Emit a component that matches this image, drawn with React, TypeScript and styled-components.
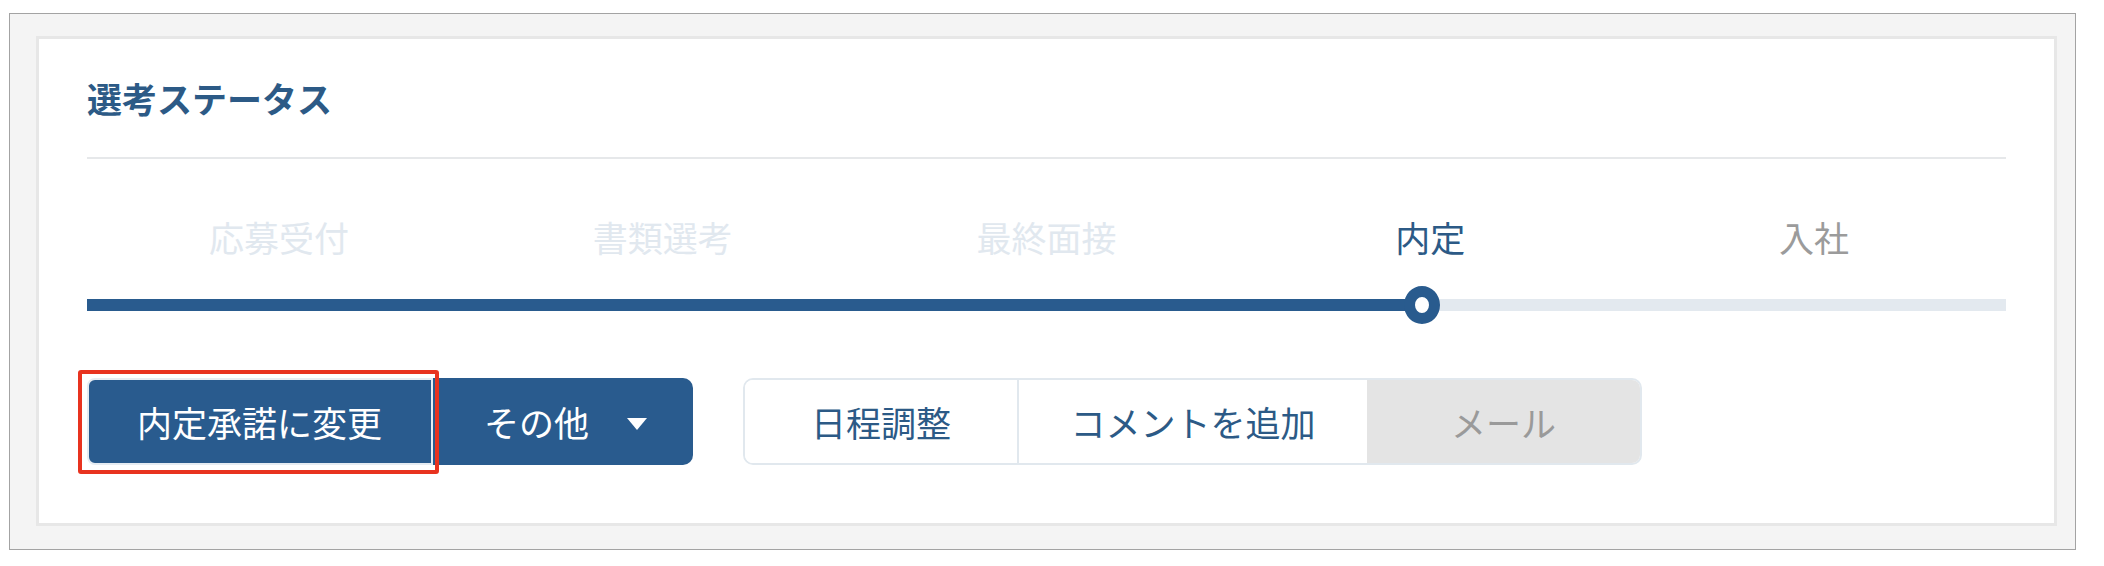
import styled, { createGlobalStyle } from 'styled-components'

const GlobalStyle = createGlobalStyle`
  html, body {
    margin: 0;
    padding: 0;
    background: #ffffff;
  }
  body {
    font-family: "Noto Sans CJK JP", "Noto Sans", sans-serif;
  }
`

const BLUE = '#295b8e'

const Frame = styled.div`
  margin: 13px 0 0 9px;
  width: 2067px;
  height: 537px;
  box-sizing: border-box;
  border: 1px solid #a3a3a3;
  background: #f4f4f4;
  padding: 22px 18px 23px 26px;
`

const Card = styled.section`
  box-sizing: border-box;
  height: 100%;
  background: #ffffff;
  border: 3px solid #e7e7e7;
  padding: 39px 48px 0;
`

const Title = styled.h2`
  margin: 0;
  font-size: 35px;
  line-height: 40px;
  font-weight: 700;
  color: #2c5a86;
`

const Divider = styled.hr`
  margin: 39px 0 0;
  border: 0;
  height: 2px;
  background: #e6e8ea;
`

const Steps = styled.ol`
  display: grid;
  grid-template-columns: repeat(5, 1fr);
  margin: 58px 0 0;
  padding: 0;
  list-style: none;
`

const Step = styled.li<{ $state: 'done' | 'current' | 'todo' }>`
  text-align: center;
  font-size: 35px;
  line-height: 40px;
  color: ${({ $state }) =>
    $state === 'current' ? '#2c5a86' : $state === 'done' ? '#e1e8ef' : '#9b9b9b'};
`

const TrackArea = styled.div`
  position: relative;
  height: 38px;
  margin-top: 29px;
  display: flex;
  align-items: center;
`

const Track = styled.div`
  width: 100%;
  height: 12px;
  background: #e3e9ef;
`

const Fill = styled.div`
  height: 100%;
  background: ${BLUE};
`

const Knob = styled.span`
  position: absolute;
  top: 0;
  width: 36px;
  height: 38px;
  box-sizing: border-box;
  border-radius: 50%;
  border: 11px solid ${BLUE};
  background: #ffffff;
  transform: translateX(-50%);
`

const Actions = styled.div`
  display: flex;
  align-items: center;
  gap: 50px;
  margin-top: 54px;
`

const SplitButton = styled.div`
  display: flex;
  height: 87px;
`

const PrimaryButton = styled.button`
  position: relative;
  z-index: 1;
  height: 100%;
  padding: 0 49px 0 48px;
  border: 2px solid #e6ecf2;
  border-radius: 8px 0 0 8px;
  background: ${BLUE};
  color: #ffffff;
  font-family: inherit;
  font-size: 35px;

  /* review annotation */
  &::after {
    content: '';
    position: absolute;
    inset: -10px -8px -11px -11px;
    border: 4px solid #e8331f;
    border-radius: 3px;
    pointer-events: none;
  }
`

const MenuButton = styled.button`
  display: flex;
  align-items: center;
  gap: 38px;
  height: 100%;
  padding: 0 46px 0 51px;
  border: 0;
  border-radius: 0 10px 10px 0;
  background: ${BLUE};
  color: #ffffff;
  font-family: inherit;
  font-size: 35px;
`

const Caret = styled.span`
  width: 0;
  height: 0;
  border-left: 10px solid transparent;
  border-right: 10px solid transparent;
  border-top: 12px solid #ffffff;
  margin-top: 4px;
`

const Segmented = styled.div`
  display: flex;
  height: 87px;
  box-sizing: border-box;
  border: 2px solid #e1e8ee;
  border-radius: 10px;
  overflow: hidden;
`

const Segment = styled.button<{ $width: number; $disabled?: boolean }>`
  width: ${({ $width }) => $width}px;
  height: 100%;
  border: 0;
  border-left: 2px solid #e1e8ee;
  background: ${({ $disabled }) => ($disabled ? '#e4e4e4' : '#ffffff')};
  color: ${({ $disabled }) => ($disabled ? '#9a9a9a' : '#2c5a86')};
  font-family: inherit;
  font-size: 35px;

  &:first-child {
    border-left: 0;
  }
  ${({ $disabled }) => ($disabled ? 'border-left: 0;' : '')}
`

const steps: { label: string; state: 'done' | 'current' | 'todo' }[] = [
  { label: '応募受付', state: 'done' },
  { label: '書類選考', state: 'done' },
  { label: '最終面接', state: 'done' },
  { label: '内定', state: 'current' },
  { label: '入社', state: 'todo' },
]

export default function App() {
  const current = steps.findIndex((s) => s.state === 'current')
  const progress = ((current + 0.5) / steps.length) * 100
  const pos = `calc(${progress}% - 8px)`

  return (
    <>
      <GlobalStyle />
      <Frame>
        <Card>
          <Title>選考ステータス</Title>
          <Divider />
          <Steps>
            {steps.map((s) => (
              <Step key={s.label} $state={s.state}>
                {s.label}
              </Step>
            ))}
          </Steps>
          <TrackArea>
            <Track>
              <Fill style={{ width: pos }} />
            </Track>
            <Knob style={{ left: pos }} />
          </TrackArea>
          <Actions>
            <SplitButton>
              <PrimaryButton>内定承諾に変更</PrimaryButton>
              <MenuButton>
                その他
                <Caret />
              </MenuButton>
            </SplitButton>
            <Segmented>
              <Segment $width={272}>日程調整</Segment>
              <Segment $width={350}>コメントを追加</Segment>
              <Segment $width={273} $disabled>
                メール
              </Segment>
            </Segmented>
          </Actions>
        </Card>
      </Frame>
    </>
  )
}
